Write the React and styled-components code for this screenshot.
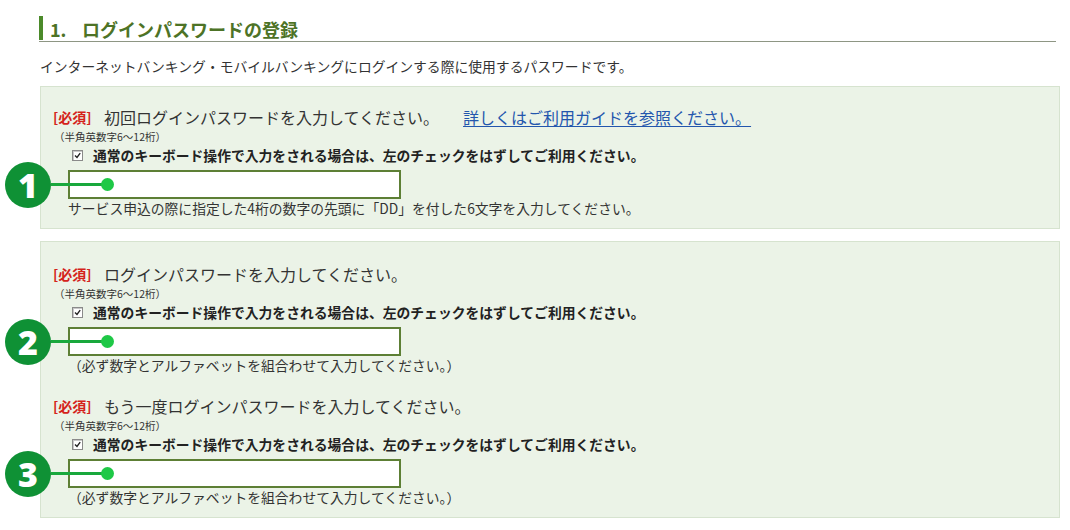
import React from "react";
import styled, { createGlobalStyle } from "styled-components";

const GlobalStyle = createGlobalStyle`
  html, body { margin: 0; padding: 0; background: #ffffff; }
  body {
    font-family: "Noto Sans CJK JP", "Noto Sans", sans-serif;
    color: #333333;
  }
`;

const Page = styled.div`
  width: 1070px;
  height: 530px;
  box-sizing: border-box;
  padding: 16px 10px 0 40px;
  overflow: hidden;
`;

const Heading = styled.h2`
  margin: 0 4px 0 -1px;
  height: 25px;
  display: flex;
  align-items: center;
  border-bottom: 1px solid #8e9684;
  font-size: 18px;
  font-weight: bold;
  color: #4d7326;
  line-height: 24px;
  white-space: nowrap;
`;

const HeadingBar = styled.span`
  align-self: flex-start;
  width: 4px;
  height: 24px;
  background: #4b8a2a;
  margin-right: 7px;
  flex: none;
`;

const HeadingNum = styled.span`
  display: inline-block;
  width: 32px;
`;

const Description = styled.p`
  margin: 14px 0 10px;
  font-size: 13.8px;
  line-height: 20px;
`;

const Panel = styled.section`
  background: #ebf3e7;
  border: 1px solid #d6e3cf;
  padding: ${(p) => p.$top}px 12px ${(p) => p.$bottom}px;
  margin-bottom: 12px;
  display: flex;
  flex-direction: column;
  gap: 21px;
`;

const Block = styled.div`
  display: flex;
  flex-direction: column;
`;

const TitleRow = styled.div`
  display: flex;
  align-items: center;
  height: 22px;
  font-size: 16px;
  white-space: nowrap;
`;

const Required = styled.span`
  display: inline-block;
  width: 51px;
  color: #d4231b;
  font-weight: bold;
  font-size: 14px;
`;

const GuideLink = styled.a`
  margin-left: 24px;
  color: #2356ad;
  text-decoration: underline;
  text-underline-offset: 2px;
  cursor: pointer;
`;

const Hint = styled.div`
  height: 17px;
  line-height: 17px;
  font-size: 10.5px;
  margin-left: 1px;
`;

const CheckRow = styled.label`
  display: flex;
  align-items: center;
  height: 20px;
  margin-left: 19px;
  font-size: 13.8px;
  font-weight: bold;
  color: #222;
  white-space: nowrap;
`;

const Box = styled.span`
  width: 9px;
  height: 9px;
  border: 1px solid #8a8a8a;
  background: #fff;
  box-shadow: inset 1px 1px 0 #c8c8c8;
  margin-right: 10px;
  display: flex;
  align-items: center;
  justify-content: center;
`;

const FieldWrap = styled.div`
  position: relative;
  margin: 5px 0 0 15px;
  width: 333px;
  height: 29px;
`;

const Field = styled.input`
  box-sizing: border-box;
  width: 100%;
  height: 100%;
  border: 2px solid #5d7f35;
  background: #fff;
  outline: none;
  padding: 0 6px;
`;

const Marker = styled.div`
  position: absolute;
  left: -63px;
  top: 50%;
  transform: translateY(-50%);
  display: flex;
  align-items: center;
  pointer-events: none;
`;

const Circle = styled.div`
  width: 46px;
  height: 46px;
  border-radius: 50%;
  background: #0f9135;
  color: #fff;
  display: flex;
  align-items: center;
  justify-content: center;
  font-family: "Open Sans", "Roboto", sans-serif;
  font-weight: 800;
  font-size: 34px;
  line-height: 1;
  flex: none;
`;

const Connector = styled.div`
  width: 52px;
  height: 3px;
  background: #18a83c;
  flex: none;
`;

const Dot = styled.div`
  width: 13px;
  height: 13px;
  border-radius: 50%;
  background: #1ec846;
  margin-left: -2px;
  flex: none;
`;

const Note = styled.div`
  height: 18px;
  line-height: 18px;
  margin: 0 0 0 15px;
  font-size: 13.8px;
  white-space: nowrap;
`;

const CheckMark = () => (
  <svg width="7" height="7" viewBox="0 0 7 7">
    <path d="M1 3.5 L3 5.5 L6.2 1.2" fill="none" stroke="#222" strokeWidth="1.4" />
  </svg>
);

const PasswordBlock = ({ num, title, link, note }) => (
  <Block>
    <TitleRow>
      <Required>[必須]</Required>
      <span>{title}</span>
      {link && <GuideLink>{link}</GuideLink>}
    </TitleRow>
    <Hint>（半角英数字6～12桁）</Hint>
    <CheckRow>
      <Box>
        <CheckMark />
      </Box>
      通常のキーボード操作で入力をされる場合は、左のチェックをはずしてご利用ください。
    </CheckRow>
    <FieldWrap>
      <Field type="password" />
      <Marker>
        <Circle>{num}</Circle>
        <Connector />
        <Dot />
      </Marker>
    </FieldWrap>
    <Note>{note}</Note>
  </Block>
);

const combo = "（必ず数字とアルファベットを組合わせて入力してください。）";

export default function App() {
  return (
    <>
      <GlobalStyle />
      <Page>
        <Heading>
          <HeadingBar />
          <HeadingNum>1.</HeadingNum>
          ログインパスワードの登録
        </Heading>
        <Description>
          インターネットバンキング・モバイルバンキングにログインする際に使用するパスワードです。
        </Description>
        <Panel $top={19} $bottom={11}>
          <PasswordBlock
            num="1"
            title="初回ログインパスワードを入力してください。"
            link="詳しくはご利用ガイドを参照ください。"
            note="サービス申込の際に指定した4桁の数字の先頭に「DD」を付した6文字を入力してください。"
          />
        </Panel>
        <Panel $top={21} $bottom={11}>
          <PasswordBlock num="2" title="ログインパスワードを入力してください。" note={combo} />
          <PasswordBlock num="3" title="もう一度ログインパスワードを入力してください。" note={combo} />
        </Panel>
      </Page>
    </>
  );
}
